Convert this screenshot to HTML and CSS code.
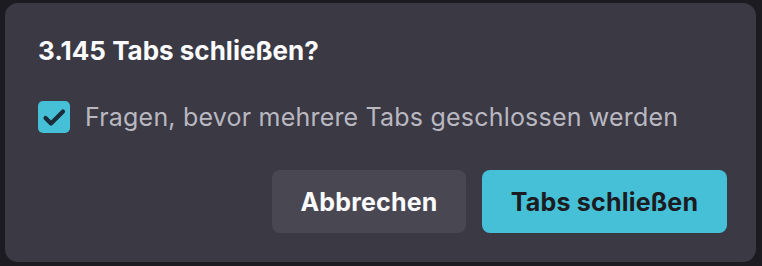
FILE: index.html
```html
<!DOCTYPE html>
<html lang="de">
<head>
<meta charset="utf-8">
<link rel="stylesheet" href="styles.css">
</head>
<body>
<div class="dialog">
  <h1 class="title">3.145 Tabs schließen?</h1>
  <label class="check-row">
    <span class="checkbox">
      <svg viewBox="0 0 32 32" width="32" height="32"><path d="M7.5 17 L13 22.5 L25 10.5" fill="none" stroke="#1c2b3a" stroke-width="4.2" stroke-linecap="round" stroke-linejoin="round"/></svg>
    </span>
    <span class="check-label">Fragen, bevor mehrere Tabs geschlossen werden</span>
  </label>
  <div class="actions">
    <button class="btn btn-secondary">Abbrechen</button>
    <button class="btn btn-primary">Tabs schließen</button>
  </div>
</div>
</body>
</html>
```

FILE: styles.css
```css
html, body {
  margin: 0;
  padding: 0;
  background: #1c1b22;
  width: 762px;
  height: 266px;
  overflow: hidden;
}
body {
  font-family: Inter, "Noto Sans", sans-serif;
  padding: 3px 6px 4px 5px;
  box-sizing: border-box;
}
.dialog {
  background: #3a3944;
  border-radius: 13px;
  height: 259px;
  box-sizing: border-box;
  padding: 32px 29px 29px 33px;
  display: flex;
  flex-direction: column;
}
.title {
  margin: 0;
  font-size: 26px;
  font-weight: 700;
  color: #fbfbfe;
  line-height: 32px;
}
.check-row {
  display: flex;
  align-items: center;
  gap: 15px;
  margin-top: 34px;
  margin-left: 0;
}
.checkbox {
  width: 32px;
  height: 32px;
  border-radius: 5px;
  background: #45c0d6;
  display: flex;
}
.check-label {
  font-size: 25px;
  letter-spacing: 0.2px;
  color: #b9b8c0;
}
.actions {
  margin-top: auto;
  display: flex;
  justify-content: flex-end;
  gap: 16px;
}
.btn {
  border: 0;
  height: 63px;
  border-radius: 8px;
  font-family: inherit;
  font-size: 25px;
  letter-spacing: 0.2px;
  font-weight: 700;
  padding: 0;
}
.btn-secondary {
  width: 194px;
  background: #494852;
  color: #fbfbfe;
}
.btn-primary {
  width: 245px;
  background: #45c0d6;
  color: #1c1b22;
}
```
